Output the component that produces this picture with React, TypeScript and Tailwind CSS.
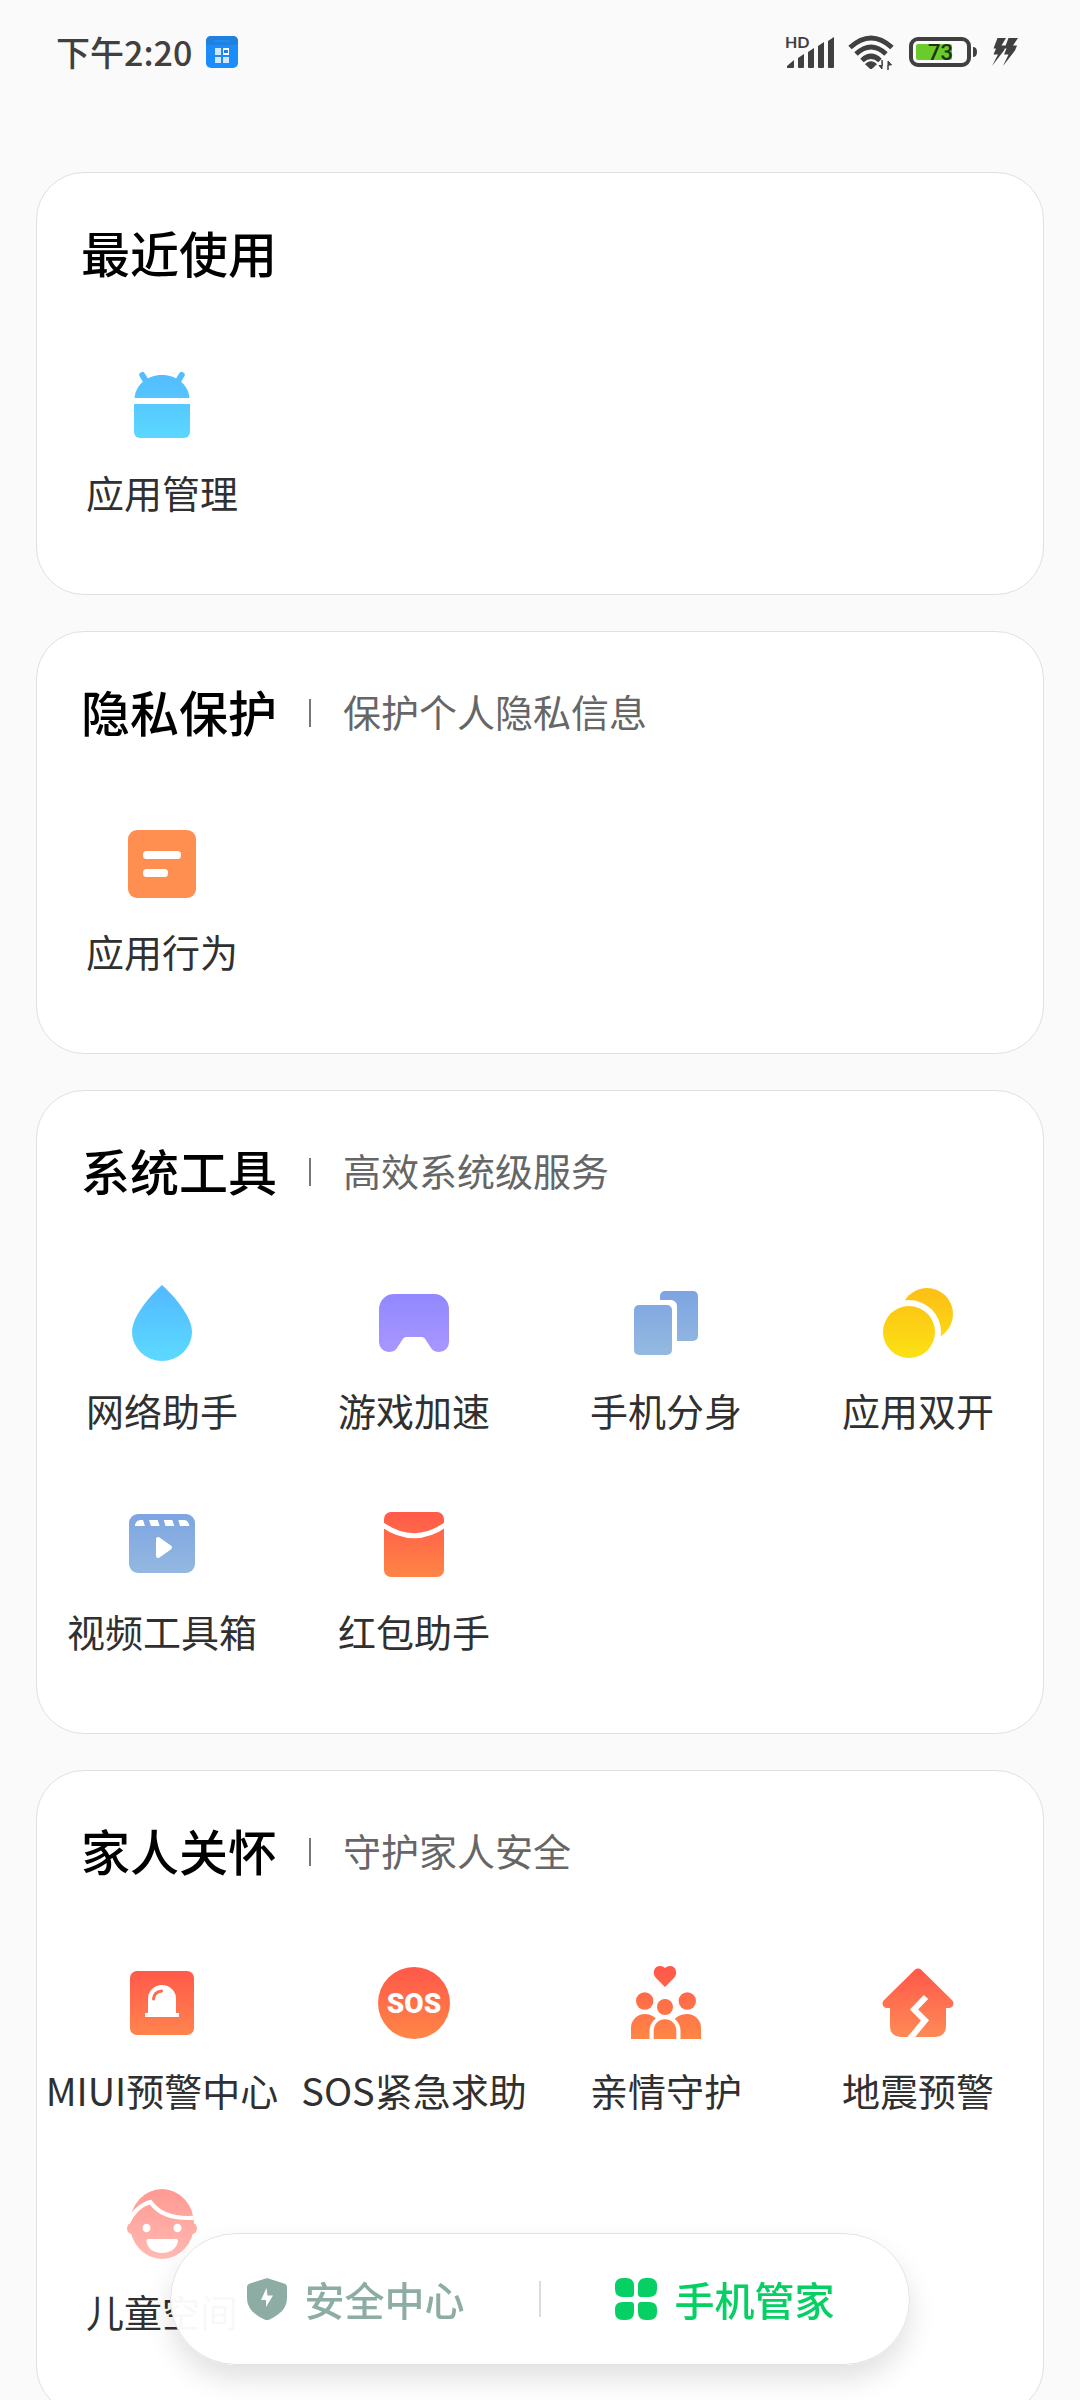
/**
 * @component App
 * @summary Phone manager home: tool sections with a floating tab bar
 */

import { useState, type ReactNode } from 'react';
import { clsx } from 'clsx';

interface Tool {
  label: string;
  icon: ReactNode;
}

interface ToolSection {
  title: string;
  subtitle?: string;
  tools: Tool[];
}

/* ---------- Icon helpers ---------- */

interface ToolIconProps {
  id: string;
  from: string;
  to: string;
  children: ReactNode;
}

// 84x84 canvas with a vertical gradient shared by all the shapes inside
const ToolIcon = ({ id, from, to, children }: ToolIconProps) => (
  <svg viewBox="0 0 84 84" className="size-[84px]" fill={`url(#${id})`} aria-hidden="true">
    <defs>
      <linearGradient id={id} gradientUnits="userSpaceOnUse" x1="0" y1="10" x2="0" y2="76">
        <stop offset="0" stopColor={from} />
        <stop offset="1" stopColor={to} />
      </linearGradient>
    </defs>
    {children}
  </svg>
);

const AndroidIcon = () => (
  <ToolIcon id="android" from="#53bbff" to="#5bd8ff">
    <path d="M14.500 35C15.500 22 27 12 42 12S68.500 22 69.500 35Z" />
    <path d="M14 41H70V69A6 6 0 0 1 64 75H20A6 6 0 0 1 14 69Z" />
    <path
      d="M22.300 12L26.500 19M61.700 12L57.500 19"
      stroke="url(#android)"
      strokeWidth="6"
      strokeLinecap="round"
    />
  </ToolIcon>
);

const BehaviorIcon = () => (
  <ToolIcon id="behavior" from="#ff8f50" to="#ff8f50">
    <rect x="8" y="8" width="68" height="68" rx="9" />
    <rect x="23" y="29" width="38" height="8" rx="3.500" fill="#fff" />
    <rect x="23" y="47" width="25" height="8" rx="3.500" fill="#fff" />
  </ToolIcon>
);

const DropIcon = () => (
  <ToolIcon id="drop" from="#53bbff" to="#5bd8ff">
    <path d="M42 4C53 14 72 35 72 51A30 29 0 0 1 12 51C12 35 31 14 42 4Z" />
  </ToolIcon>
);

const GameIcon = () => (
  <ToolIcon id="game" from="#9087ff" to="#aa98ff">
    <path d="M22 13H62A15 15 0 0 1 77 28V61A9.500 10 0 0 1 67.500 71C64 71 61 70 59 67L53.500 58.500Q52.500 56 50 56H34Q31.500 56 30.500 58.500L25 67C23 70 20 71 16.500 71A9.500 10 0 0 1 7 61V28A15 15 0 0 1 22 13Z" />
  </ToolIcon>
);

const CloneIcon = () => (
  <ToolIcon id="clone" from="#7da4e2" to="#95bae0">
    <rect x="36" y="10" width="38" height="50" rx="5" />
    <rect x="5" y="19" width="48" height="60" rx="6" fill="#fff" />
    <rect x="10" y="24" width="38" height="50" rx="5" />
  </ToolIcon>
);

const DualAppIcon = () => (
  <ToolIcon id="dual" from="#fdc014" to="#fbe114">
    <circle cx="51" cy="33" r="26" />
    <circle cx="33" cy="51" r="32" fill="#fff" />
    <circle cx="33" cy="51" r="26" />
  </ToolIcon>
);

const VideoIcon = () => (
  <ToolIcon id="video" from="#7da4e2" to="#95bae0">
    <rect x="9" y="12" width="66" height="59" rx="9" />
    <path
      d="M15 24C15 20 18 18 21 18H23L25 24ZM29 18H37.700L39.700 24H31ZM43.700 18H52.300L54.300 24H45.500ZM58.300 18H64C67 18 69.300 21 69.300 24H60Z"
      fill="#fff"
    />
    <path
      d="M38 37V54L50 45.500Z"
      fill="#fff"
      stroke="#fff"
      strokeWidth="4"
      strokeLinejoin="round"
    />
  </ToolIcon>
);

const RedPacketIcon = () => (
  <ToolIcon id="packet" from="#ff5a4a" to="#ff8546">
    <rect x="12" y="10" width="60" height="65" rx="7" />
    <path d="M10 22.500Q42 45 74 22.500" fill="none" stroke="#fff" strokeWidth="5" />
  </ToolIcon>
);

const AlarmIcon = () => (
  <ToolIcon id="alarm" from="#ff5a4a" to="#ff854e">
    <rect x="10" y="10" width="64" height="64" rx="7" />
    <path d="M28 52V38A14 14 0 0 1 56 38V52H59V56H25V52Z" fill="#fff" />
    <path
      d="M33.500 38C34 33 37 30.500 41.500 30"
      fill="none"
      stroke="#ff6a4c"
      strokeWidth="3"
      strokeLinecap="round"
    />
  </ToolIcon>
);

const SosIcon = () => (
  <ToolIcon id="sos" from="#ff5a4a" to="#ff8546">
    <circle cx="42" cy="42" r="36" />
    <text
      x="42"
      y="52"
      textAnchor="middle"
      fill="#fff"
      className="font-['Roboto',sans-serif] text-[28px] font-black"
    >
      SOS
    </text>
  </ToolIcon>
);

const FamilyIcon = () => (
  <ToolIcon id="family" from="#ff5a4a" to="#ff8546">
    <path d="M41 26L32 17C28 13 29.500 5 36 5Q39 5 41 7Q43 5 46 5C52.500 5 54 13 50 17Z" />
    <circle cx="20.700" cy="40" r="8.700" />
    <circle cx="63.300" cy="40" r="8.700" />
    <circle cx="41" cy="46" r="8" />
    <path d="M7 78V67A14 14 0 0 1 21 53Q29 53 34 60V78ZM77 78V67A14 14 0 0 0 63 53Q54 53 49 60V78Z" />
    <path d="M25.500 79V70A15.500 15.500 0 0 1 56.500 70V79Z" fill="#fff" />
    <path d="M29.700 78V69.500A11.300 11.300 0 0 1 52.300 69.500V78Z" />
  </ToolIcon>
);

const QuakeIcon = () => (
  <ToolIcon id="quake" from="#ff5a4a" to="#ff8a56">
    <path
      d="M42 12L11 42.500H73Z"
      stroke="url(#quake)"
      strokeWidth="9"
      strokeLinejoin="round"
    />
    <path d="M14 42H70V66A10 10 0 0 1 60 76H24A10 10 0 0 1 14 66Z" />
    <path d="M50 36L38 48.500L49 59.500L32 80" fill="none" stroke="#fff" strokeWidth="6" />
  </ToolIcon>
);

const KidIcon = () => (
  <ToolIcon id="kid" from="#ff9a94" to="#ffbab2">
    <ellipse cx="42" cy="42" rx="32" ry="35" />
    <circle cx="13" cy="46.500" r="6" />
    <circle cx="71" cy="46.500" r="6" />
    <path
      d="M8 41C13 30 20 23 30.500 20C38 31 52 38 78 35.500"
      fill="none"
      stroke="#fff"
      strokeWidth="4"
    />
    <ellipse cx="26.500" cy="46" rx="4" ry="4.300" fill="#fff" />
    <ellipse cx="57.500" cy="46" rx="4" ry="4.300" fill="#fff" />
    <path d="M28 57H56.500Q58 57 58 59C57 66 51 71 42 71S27 66 26.500 59Q26.500 57 28 57Z" fill="#fff" />
  </ToolIcon>
);

/* ---------- Data ---------- */

const sections: ToolSection[] = [
  {
    title: '最近使用',
    tools: [{ label: '应用管理', icon: <AndroidIcon /> }],
  },
  {
    title: '隐私保护',
    subtitle: '保护个人隐私信息',
    tools: [{ label: '应用行为', icon: <BehaviorIcon /> }],
  },
  {
    title: '系统工具',
    subtitle: '高效系统级服务',
    tools: [
      { label: '网络助手', icon: <DropIcon /> },
      { label: '游戏加速', icon: <GameIcon /> },
      { label: '手机分身', icon: <CloneIcon /> },
      { label: '应用双开', icon: <DualAppIcon /> },
      { label: '视频工具箱', icon: <VideoIcon /> },
      { label: '红包助手', icon: <RedPacketIcon /> },
    ],
  },
  {
    title: '家人关怀',
    subtitle: '守护家人安全',
    tools: [
      { label: 'MIUI预警中心', icon: <AlarmIcon /> },
      { label: 'SOS紧急求助', icon: <SosIcon /> },
      { label: '亲情守护', icon: <FamilyIcon /> },
      { label: '地震预警', icon: <QuakeIcon /> },
      { label: '儿童空间', icon: <KidIcon /> },
    ],
  },
];

/* ---------- Status bar ---------- */

const StatusBar = () => (
  <header className="flex h-[104px] shrink-0 items-center justify-between px-14 text-[#404040]">
    <div className="flex items-center gap-3.5">
      <time className="text-[34px] leading-10 font-medium">下午2:20</time>
      <svg viewBox="0 0 32 32" className="size-8" aria-hidden="true">
        <rect width="32" height="32" rx="5" fill="#1b8cfb" />
        <path d="M0 9V5A5 5 0 0 1 5 0H27A5 5 0 0 1 32 5V9Z" fill="#2180de" />
        <rect x="8" y="4" width="16" height="2" rx="1" fill="#1b8cfb" />
        <path d="M9 12H15V19H9ZM9 21H15V27H9ZM17 21H23V27H17Z" fill="#d3e8fe" />
        <path d="M17 12H23V19H17Z" fill="#fff" />
        <path d="M18 14H22V17H18Z" fill="#1b7fe6" />
      </svg>
    </div>

    <div className="flex items-center">
      <svg viewBox="0 -6 52 48" className="mr-3 h-12 w-[52px]" fill="currentColor" aria-hidden="true">
        <text x="1" y="14" className="font-['Lato',sans-serif] text-[16px] font-bold">
          HD
        </text>
        <path d="M3 34V32L10 26V33Q10 34 9 34ZM14 33V24L20 20V33Q20 34 19 34H15Q14 34 14 33ZM24 33V18L30 14V33Q30 34 29 34H25Q24 34 24 33ZM34 33V12L40 8V33Q40 34 39 34H35Q34 34 34 33ZM44 33V7L50 3V33Q50 34 49 34H45Q44 34 44 33Z" />
      </svg>
      <svg viewBox="0 0 48 36" className="mr-3 h-9 w-12" fill="none" stroke="currentColor" aria-hidden="true">
        <path
          d="M2 13.500Q23 -5.500 44 13.500M8 20Q23 6 38 20M14 26.500Q23 18 32 26.500"
          strokeWidth="5"
        />
        <path
          d="M17.500 30Q23 25.500 28.500 30L24.500 34Q23 35.500 21.500 34ZM34 26V35L31 31.500H34.500ZM40 36V27L43.500 31H40Z"
          fill="currentColor"
          strokeWidth="1"
        />
      </svg>
      <svg viewBox="0 0 70 32" className="mr-3 h-8 w-[70px]" aria-hidden="true">
        <rect x="3" y="3" width="58" height="26" rx="7" fill="none" stroke="#404040" strokeWidth="4" />
        <rect x="8" y="8" width="36" height="16" rx="2" fill="#6acb2b" />
        <path d="M65 11Q69 11 69 16T65 21Z" fill="#404040" />
        <text x="20" y="24" fill="#1d3310" className="font-['Roboto',sans-serif] text-[22px] font-medium">
          73
        </text>
      </svg>
      <svg viewBox="0 0 34 34" className="size-[34px]" fill="currentColor" aria-hidden="true">
        <path d="M7.500 3H16L11.500 10.500H16L14 15.500L2 31L8 19.500H3.500L6 13.500H3.500ZM18.500 3H28L23 10.500H27L25 15.500L13 31L18.500 19.500H14L16.500 13.500H14.500Z" />
      </svg>
    </div>
  </header>
);

/* ---------- Cards ---------- */

const ToolTile = ({ label, icon }: Tool) => (
  <button type="button" className="flex flex-col items-center gap-[21px]">
    {icon}
    <span className="text-[38px] leading-[48px] whitespace-nowrap text-[#303030]">{label}</span>
  </button>
);

const SectionCard = ({ title, subtitle, tools }: ToolSection) => (
  <section className="rounded-[48px] border border-[#e0e0e0] bg-white pt-[43px] pb-[78px]">
    <div className="flex h-[72px] items-center pl-11">
      <h2 className="text-[49px] leading-[72px] font-medium text-black">{title}</h2>
      {subtitle && (
        <p className="flex items-center text-[38px] leading-[48px] text-[#666]">
          <span className="mx-8 mt-1 h-7 w-0.5 bg-[#777]" />
          {subtitle}
        </p>
      )}
    </div>
    <div className="-mx-px mt-[75px] grid grid-cols-4 gap-y-[68px]">
      {tools.map((tool) => (
        <ToolTile key={tool.label} {...tool} />
      ))}
    </div>
  </section>
);

/* ---------- Bottom tab bar ---------- */

const ShieldIcon = () => (
  <svg viewBox="0 0 40 42" className="h-[42px] w-10" aria-hidden="true">
    <path
      d="M17 1Q20 -.500 23 1L37 5.500Q40 6.500 40 9V20C40 31 32 37 22.500 41.500Q20 42.500 17.500 41.500C8 37 0 31 0 20V9Q0 6.500 3 5.500Z"
      fill="currentColor"
    />
    <path d="M19.500 10L14 22H19V29L26 17.500H20.500Z" fill="#fff" />
  </svg>
);

const GridIcon = () => (
  <svg viewBox="0 0 42 42" className="size-[42px]" fill="currentColor" aria-hidden="true">
    <path d="M8 0H11Q19 0 19 8V16Q19 19 16 19H8Q0 19 0 11V8Q0 0 8 0ZM31 0H34Q42 0 42 8V11Q42 19 34 19H26Q23 19 23 16V8Q23 0 31 0ZM8 24H16Q19 24 19 27V34Q19 42 11 42H8Q0 42 0 34V31Q0 24 8 24ZM26 24H34Q42 24 42 31V34Q42 42 34 42H31Q23 42 23 34V27Q23 24 26 24Z" />
  </svg>
);

const tabs = [
  { id: 'security', label: '安全中心', icon: <ShieldIcon /> },
  { id: 'manager', label: '手机管家', icon: <GridIcon /> },
];

const TabBar = () => {
  const [active, setActive] = useState('manager');

  return (
    <nav className="fixed inset-x-[170px] bottom-[35px] flex h-[132px] items-center rounded-full border border-[#e2e2e2] bg-white/97 shadow-[0_14px_28px_rgba(0,0,0,0.12)]">
      {tabs.map((tab, index) => (
        <div key={tab.id} className="flex h-full flex-1 items-center">
          {index > 0 && <span className="-mx-px h-9 w-0.5 bg-[#dcdcdc]" />}
          <button
            type="button"
            onClick={() => setActive(tab.id)}
            className={clsx(
              'flex h-full flex-1 items-center justify-center gap-[18px] text-[40px] leading-[48px] font-medium',
              active === tab.id ? 'text-[#06cf64]' : 'text-[#8caca4]'
            )}
          >
            {tab.icon}
            {tab.label}
          </button>
        </div>
      ))}
    </nav>
  );
};

export default function App() {
  return (
    <div className="flex h-screen flex-col overflow-hidden bg-[#fafafa] font-['Noto_Sans_CJK_SC',sans-serif]">
      <StatusBar />
      <main className="flex-1 overflow-y-auto px-9 pt-[68px] pb-9 [scrollbar-width:none]">
        <div className="flex flex-col gap-9">
          {sections.map((section) => (
            <SectionCard key={section.title} {...section} />
          ))}
        </div>
      </main>
      <TabBar />
    </div>
  );
}
